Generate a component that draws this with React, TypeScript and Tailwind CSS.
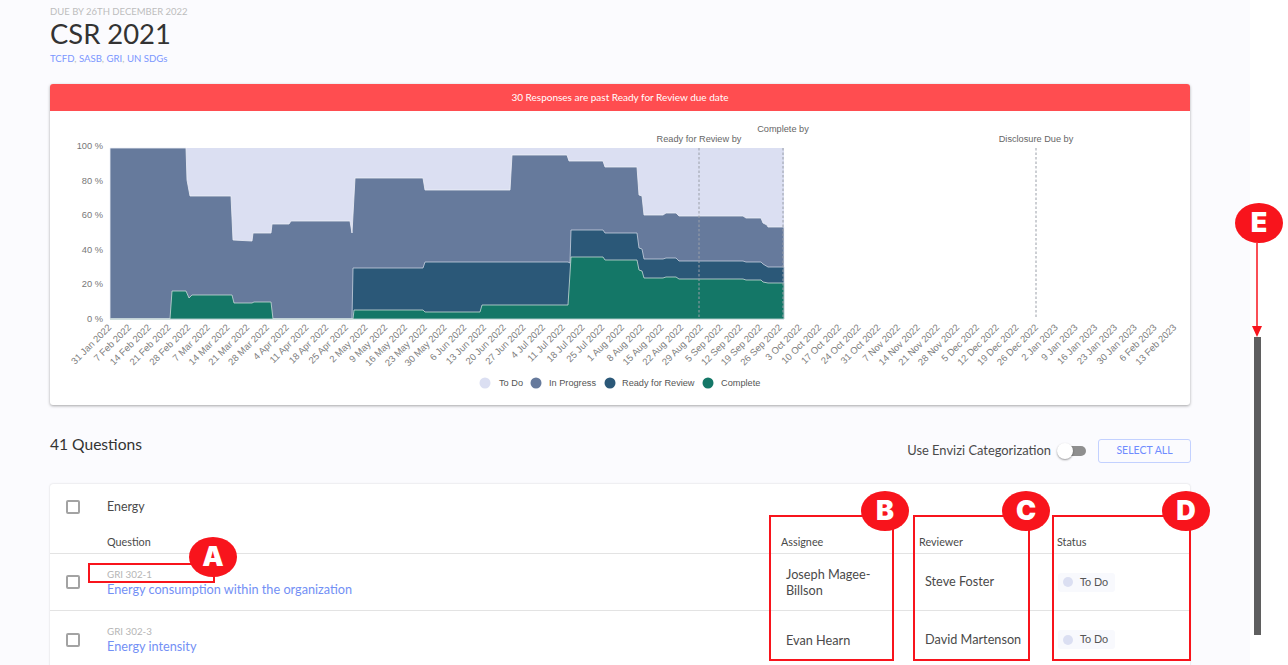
const weeks = [
  '31 Jan 2022', '7 Feb 2022', '14 Feb 2022', '21 Feb 2022', '28 Feb 2022', '7 Mar 2022', '14 Mar 2022',
  '21 Mar 2022', '28 Mar 2022', '4 Apr 2022', '11 Apr 2022', '18 Apr 2022', '25 Apr 2022', '2 May 2022',
  '9 May 2022', '16 May 2022', '23 May 2022', '30 May 2022', '6 Jun 2022', '13 Jun 2022', '20 Jun 2022',
  '27 Jun 2022', '4 Jul 2022', '11 Jul 2022', '18 Jul 2022', '25 Jul 2022', '1 Aug 2022', '8 Aug 2022',
  '15 Aug 2022', '22 Aug 2022', '29 Aug 2022', '5 Sep 2022', '12 Sep 2022', '19 Sep 2022', '26 Sep 2022',
  '3 Oct 2022', '10 Oct 2022', '17 Oct 2022', '24 Oct 2022', '31 Oct 2022', '7 Nov 2022', '14 Nov 2022',
  '21 Nov 2022', '28 Nov 2022', '5 Dec 2022', '12 Dec 2022', '19 Dec 2022', '26 Dec 2022', '2 Jan 2023',
  '9 Jan 2023', '16 Jan 2023', '23 Jan 2023', '30 Jan 2023', '6 Feb 2023', '13 Feb 2023',
];

const yLabels = [
  { label: '100 %', y: 146 },
  { label: '80 %', y: 181 },
  { label: '60 %', y: 215 },
  { label: '40 %', y: 250 },
  { label: '20 %', y: 284 },
  { label: '0 %', y: 319 },
];

const inProgressTop =
  '110,148 186,148 187,180 190,196 231,196 233,240 252,241 253,233 271,233 272,224 289,224 291,221 350,221 352,233 355,178 423,178 425,190 510,190 512,155 567,155 569,161 603,161 605,167 637,167 639,195 642,196 644,215 663,215 666,213 676,213 679,216 743,216 746,218 761,218 763,223 767,225 768,227 784,227';
const readyTop =
  '110,319 352,319 353,268 423,268 425,262 568,262 570,263 571,230 603,230 605,233 637,233 639,248 642,249 644,259 663,259 666,258 676,258 679,261 743,261 746,262 761,262 763,264 768,267 784,267';
const completeTop =
  '110,319 170,319 172,291 186,291 189,298 192,295 232,295 234,303 252,303 254,302 271,302 273,319 353,319 354,310 423,310 425,312 480,312 482,305 568,305 571,257 603,257 605,260 637,260 639,270 642,271 644,278 663,278 666,277 676,277 679,279 743,279 746,280 761,280 763,282 768,283 784,283';

const legend = [
  { label: 'To Do', color: '#dbdff2', cx: 485, tx: 499 },
  { label: 'In Progress', color: '#667a9c', cx: 536, tx: 549 },
  { label: 'Ready for Review', color: '#2b5878', cx: 610, tx: 622 },
  { label: 'Complete', color: '#147767', cx: 708, tx: 721 },
];

const markers = [
  { label: 'Ready for Review by', x: 699, y: 142 },
  { label: 'Complete by', x: 783, y: 132 },
  { label: 'Disclosure Due by', x: 1036, y: 142 },
];

const rows = [
  { code: 'GRI 302-1', title: 'Energy consumption within the organization', assignee: 'Joseph Magee-Billson', reviewer: 'Steve Foster' },
  { code: 'GRI 302-3', title: 'Energy intensity', assignee: 'Evan Hearn', reviewer: 'David Martenson' },
];

const Chart = () => (
  <svg viewBox="50 111 1140 294" className="block h-[294px] w-[1140px]" fontFamily="'Liberation Sans', sans-serif">
    <rect x="110" y="148" width="674" height="171" fill="#dbdff2" />
    <polygon points={`${inProgressTop} 784,319 110,319`} fill="#667a9c" stroke="#eef0f8" strokeWidth="0.8" />
    <polygon points={`${readyTop} 784,319`} fill="#2b5878" stroke="#c9d2e0" strokeWidth="0.8" />
    <polygon points={`${completeTop} 784,319`} fill="#147767" stroke="#c9dcd8" strokeWidth="0.8" />

    {markers.map((m) => (
      <g key={m.label}>
        <line x1={m.x} x2={m.x} y1="148" y2="319" stroke="#9a9fa8" strokeWidth="1" strokeDasharray="2.5 2" />
        <text x={m.x} y={m.y} textAnchor="middle" fontSize="9.2" fill="#666">
          {m.label}
        </text>
      </g>
    ))}

    {yLabels.map((t) => (
      <text key={t.label} x="103" y={t.y + 3} textAnchor="end" fontSize="9.3" fill="#777">
        {t.label}
      </text>
    ))}

    {weeks.map((w, i) => {
      const x = 112 + i * 19.72;
      return (
        <text key={w} x={x} y="328" textAnchor="end" fontSize="9.5" fill="#808080" transform={`rotate(-45 ${x} 328)`}>
          {w}
        </text>
      );
    })}

    {legend.map((l) => (
      <g key={l.label}>
        <circle cx={l.cx} cy="383" r="5.5" fill={l.color} />
        <text x={l.tx} y="386" fontSize="9.2" fill="#555">
          {l.label}
        </text>
      </g>
    ))}
  </svg>
);

const Checkbox = () => <div className="h-[14px] w-[14px] rounded-[2px] border-2 border-[#a3a3a3] bg-white" />;

const StatusChip = () => (
  <div className="flex h-[19px] w-[57px] items-center gap-[7px] rounded-[3px] bg-[#f8f9fd] pl-[5px] text-[10.8px] text-[#555]">
    <span className="h-[10px] w-[10px] rounded-full bg-[#dbdff2]" />
    To Do
  </div>
);

const Badge = ({ letter, className }: { letter: string; className: string }) => (
  <div
    className={`absolute flex h-[40px] w-[48px] items-center justify-center rounded-[50%] bg-[#f8141c] font-['Inter',sans-serif] text-[27px] font-black text-white ${className}`}
  >
    {letter}
  </div>
);

export default function App() {
  return (
    <div className="relative h-[665px] w-[1288px] overflow-hidden bg-white font-['Lato','Noto_Sans',sans-serif]">
      <div className="h-full w-[1250px] bg-[#fbfbfe] pl-[50px] pr-[60px]">
        <div className="pt-[6px] text-[9.5px] leading-[12px] text-[#bdbdbd]">DUE BY 26TH DECEMBER 2022</div>
        <h1 className="mt-[-1px] text-[27.4px] leading-[34px] text-[#333]">CSR 2021</h1>
        <div className="mt-[1px] text-[9.6px] leading-[13px] text-[#bdbdbd]">
          <span className="text-[#7a96ff]">TCFD</span>, <span className="text-[#7a96ff]">SASB</span>,{' '}
          <span className="text-[#7a96ff]">GRI</span>, <span className="text-[#7a96ff]">UN SDGs</span>
        </div>

        <div className="mt-[19px] w-[1140px] overflow-hidden rounded-[3px] bg-white shadow-[0_1px_3px_rgba(0,0,0,0.35)]">
          <div className="flex h-[27px] items-center justify-center bg-[#ff4d50] text-[10px] text-white">
            30 Responses are past Ready for Review due date
          </div>
          <Chart />
        </div>

        <div className="mt-[23px] flex h-[34px] w-[1141px] items-center justify-between">
          <div className="text-[15.6px] text-[#333]">41 Questions</div>
          <div className="mt-[12px] flex items-center">
            <span className="text-[12.9px] text-[#4a4a4a]">Use Envizi Categorization</span>
            <div className="relative ml-[11px] h-[10px] w-[24px] rounded-full bg-[#8f8f8f]">
              <div className="absolute left-[-5px] top-[-3px] h-[16px] w-[16px] rounded-full bg-white shadow-[0_1px_2px_rgba(0,0,0,0.4)]" />
            </div>
            <button className="ml-[12px] h-[24px] w-[93px] rounded-[3px] border border-[#c3d1ff] text-[10.5px] text-[#6f8cff]">
              SELECT ALL
            </button>
          </div>
        </div>

        <div className="mt-[22px] h-[200px] w-[1140px] rounded-t-[3px] bg-white shadow-[0_0_2px_rgba(0,0,0,0.18)]">
          <div className="flex h-[46px] items-center pl-[16px]">
            <Checkbox />
            <span className="ml-[27px] text-[12.4px] text-[#4a4a4a]">Energy</span>
          </div>
          <div className="grid h-[24px] grid-cols-[731px_138px_138px_133px] items-start border-b border-[#e3e3e3] pt-[4px] text-[10.8px] text-[#4a4a4a]">
            <span className="pl-[57px]">Question</span>
            <span>Assignee</span>
            <span>Reviewer</span>
            <span>Status</span>
          </div>
          {rows.map((r) => (
            <div
              key={r.code}
              className="grid h-[57px] grid-cols-[57px_674px_138px_138px_133px] items-center border-b border-[#e3e3e3] last:border-b-0"
            >
              <div className="pl-[16px]">
                <Checkbox />
              </div>
              <div>
                <div className="text-[9.8px] leading-[13px] text-[#b5b5b5]">{r.code}</div>
                <div className="text-[12.7px] leading-[16px] text-[#7390f5]">{r.title}</div>
              </div>
              <div className="w-[105px] pl-[5px] text-[12.7px] leading-[16px] text-[#4a4a4a]">{r.assignee}</div>
              <div className="pl-[6px] text-[12.7px] text-[#4a4a4a]">{r.reviewer}</div>
              <div className="pl-[1px]">
                <StatusChip />
              </div>
            </div>
          ))}
        </div>
      </div>

      {/* callouts laid over the screenshot */}
      <div className="absolute left-[88px] top-[563px] h-[20px] w-[127px] border-2 border-[#f8141c]" />
      <div className="absolute left-[769px] top-[515px] h-[146px] w-[125px] border-2 border-[#f8141c]" />
      <div className="absolute left-[913px] top-[515px] h-[146px] w-[117px] border-2 border-[#f8141c]" />
      <div className="absolute left-[1052px] top-[515px] h-[146px] w-[139px] border-2 border-[#f8141c]" />
      <Badge letter="A" className="left-[189px] top-[537px]" />
      <Badge letter="B" className="left-[861px] top-[491px]" />
      <Badge letter="C" className="left-[1002px] top-[491px]" />
      <Badge letter="D" className="left-[1162px] top-[491px]" />
      <Badge letter="E" className="left-[1235px] top-[203px]" />

      <div className="absolute left-[1254px] top-[337px] h-[298px] w-[7px] bg-[#5f5f5f]" />
      <svg className="absolute left-[1250px] top-[243px]" width="14" height="95" viewBox="0 0 14 95">
        <line x1="7" y1="0" x2="7" y2="86" stroke="#f8141c" strokeWidth="1.5" />
        <polygon points="2,83 12,83 7,94" fill="#f8141c" />
      </svg>
    </div>
  );
}
